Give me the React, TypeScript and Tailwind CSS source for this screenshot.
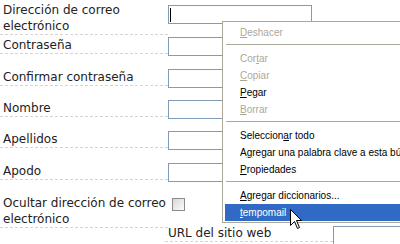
const labelFont = { fontFamily: '"DejaVu Sans", Verdana, sans-serif' };

function Field({ first }: { first?: boolean }) {
  return (
    <div className="relative w-[144px] h-[19px] border border-[#7f9db9] bg-white">
      {first && <div className="absolute left-[1px] top-[2px] w-px h-[14px] bg-black" />}
    </div>
  );
}

function Row({ label, mt, children }: { label: React.ReactNode; mt: string; children: React.ReactNode }) {
  return (
    <div className={`flex items-start ${mt}`}>
      <div className="w-[168px] shrink-0 pl-[3px] leading-[16px] border-b border-dashed border-[#d4d4d4]">
        {label}
      </div>
      <div>{children}</div>
    </div>
  );
}

type Item = { text: React.ReactNode; disabled?: boolean; active?: boolean } | "sep";

const U = ({ c }: { c: string }) => <span className="underline underline-offset-1">{c}</span>;

const items: Item[] = [
  { text: <><U c="D" />eshacer</>, disabled: true },
  "sep",
  { text: <>Cor<U c="t" />ar</>, disabled: true },
  { text: <><U c="C" />opiar</>, disabled: true },
  { text: <><U c="P" />egar</> },
  { text: <><U c="B" />orrar</>, disabled: true },
  "sep",
  { text: <>Seleccion<U c="a" />r todo</> },
  { text: <>A<U c="g" />regar una palabra clave a esta búsqueda</> },
  { text: <><U c="P" />ropiedades</> },
  "sep",
  { text: <><U c="A" />gregar diccionarios...</> },
  { text: <><U c="t" />empomail</>, active: true },
];

function ContextMenu() {
  return (
    <div
      className="absolute left-[222px] top-[21px] w-[200px] border border-[#aca899] bg-white pt-[2px] px-[2px] pb-px text-[10px]"
      style={{ fontFamily: '"Liberation Sans", Tahoma, sans-serif' }}
    >
      {items.map((it, i) =>
        it === "sep" ? (
          <div key={i} className="h-[9px] pt-[3px] pl-px">
            <div className="h-px bg-[#aca899]" />
          </div>
        ) : (
          <div
            key={i}
            className={`h-[17px] leading-[17px] pl-[15px] whitespace-nowrap ${
              it.active ? "bg-[#316ac5] text-white" : it.disabled ? "text-[#aca899]" : "text-black"
            }`}
          >
            {it.text}
          </div>
        )
      )}
    </div>
  );
}

function Cursor() {
  return (
    <svg className="absolute left-[290px] top-[209px]" width="13" height="21" viewBox="0 0 13 21">
      <path
        d="M0.5 0.5 L0.5 16.5 L4.5 12.5 L7.5 19.5 L9.5 18.5 L6.5 11.5 L11.5 11.5 Z"
        fill="white"
        stroke="black"
        strokeWidth="1"
      />
    </svg>
  );
}

export default function App() {
  return (
    <div className="relative w-[400px] h-[244px] overflow-hidden bg-white text-[12px] text-[#222]" style={labelFont}>
      <Row label={<>Dirección de correo<br />electrónico</>} mt="mt-[2px]">
        <div className="mt-[3px]"><Field first /></div>
      </Row>
      <Row label="Contraseña" mt="mt-[2px]">
        <Field />
      </Row>
      <Row label="Confirmar contraseña" mt="mt-[13px]">
        <Field />
      </Row>
      <Row label="Nombre" mt="mt-[12px]">
        <Field />
      </Row>
      <Row label="Apellidos" mt="mt-[12px]">
        <Field />
      </Row>
      <Row label="Apodo" mt="mt-[13px]">
        <Field />
      </Row>
      <Row label={<>Ocultar dirección de correo<br />electrónico</>} mt="mt-[13px]">
        <div className="ml-[4px] mt-[3px] w-[13px] h-[13px] border border-[#8c8c8c] bg-gradient-to-br from-[#d8d8d8] to-[#fbfbfb]" />
      </Row>
      <div className="flex items-start mt-[-3px] pl-[165px]">
        <div className="w-[168px] shrink-0 pl-[3px] leading-[16px] border-b border-dashed border-[#d4d4d4]">URL del sitio web</div>
        <div className="mt-px w-[120px] shrink-0 h-[19px] border border-[#7f9db9] bg-white" />
      </div>
      <ContextMenu />
      <Cursor />
    </div>
  );
}
